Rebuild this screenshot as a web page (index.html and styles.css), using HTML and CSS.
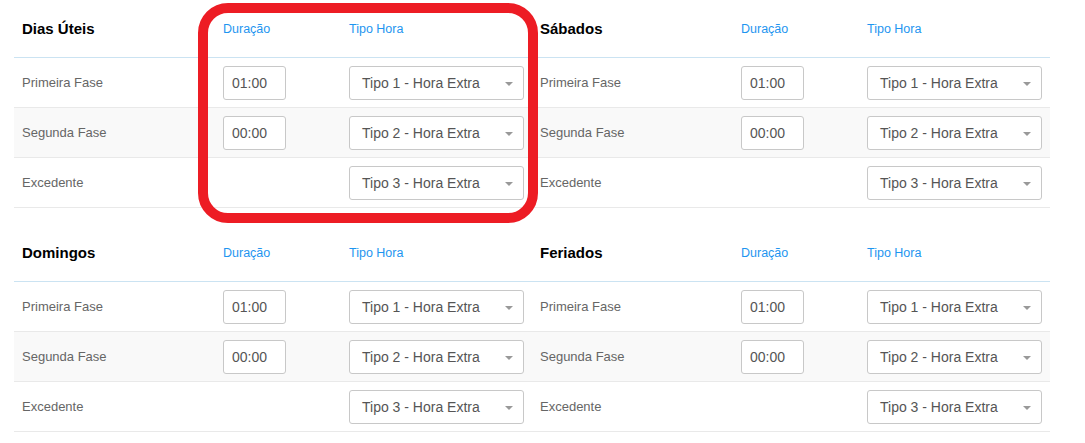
FILE: index.html
```html
<!DOCTYPE html>
<html lang="pt">
<head>
<meta charset="utf-8">
<title>Horas Extras</title>
<link rel="stylesheet" href="styles.css">
</head>
<body>
<div class="page">
  <div class="group">
    <div class="tbl">
      <div class="row head"><div class="title">Dias Úteis</div><div class="col-h">Duração</div><div class="col-h">Tipo Hora</div></div>
      <div class="row"><div class="lbl">Primeira Fase</div><div><span class="inp">01:00</span></div><div><span class="sel">Tipo 1 - Hora Extra<i class="caret"></i></span></div></div>
      <div class="row alt"><div class="lbl">Segunda Fase</div><div><span class="inp">00:00</span></div><div><span class="sel">Tipo 2 - Hora Extra<i class="caret"></i></span></div></div>
      <div class="row"><div class="lbl">Excedente</div><div></div><div><span class="sel">Tipo 3 - Hora Extra<i class="caret"></i></span></div></div>
    </div>
    <div class="tbl">
      <div class="row head"><div class="title">Sábados</div><div class="col-h">Duração</div><div class="col-h">Tipo Hora</div></div>
      <div class="row"><div class="lbl">Primeira Fase</div><div><span class="inp">01:00</span></div><div><span class="sel">Tipo 1 - Hora Extra<i class="caret"></i></span></div></div>
      <div class="row alt"><div class="lbl">Segunda Fase</div><div><span class="inp">00:00</span></div><div><span class="sel">Tipo 2 - Hora Extra<i class="caret"></i></span></div></div>
      <div class="row"><div class="lbl">Excedente</div><div></div><div><span class="sel">Tipo 3 - Hora Extra<i class="caret"></i></span></div></div>
    </div>
  </div>
  <div class="group">
    <div class="tbl">
      <div class="row head"><div class="title">Domingos</div><div class="col-h">Duração</div><div class="col-h">Tipo Hora</div></div>
      <div class="row"><div class="lbl">Primeira Fase</div><div><span class="inp">01:00</span></div><div><span class="sel">Tipo 1 - Hora Extra<i class="caret"></i></span></div></div>
      <div class="row alt"><div class="lbl">Segunda Fase</div><div><span class="inp">00:00</span></div><div><span class="sel">Tipo 2 - Hora Extra<i class="caret"></i></span></div></div>
      <div class="row"><div class="lbl">Excedente</div><div></div><div><span class="sel">Tipo 3 - Hora Extra<i class="caret"></i></span></div></div>
    </div>
    <div class="tbl">
      <div class="row head"><div class="title">Feriados</div><div class="col-h">Duração</div><div class="col-h">Tipo Hora</div></div>
      <div class="row"><div class="lbl">Primeira Fase</div><div><span class="inp">01:00</span></div><div><span class="sel">Tipo 1 - Hora Extra<i class="caret"></i></span></div></div>
      <div class="row alt"><div class="lbl">Segunda Fase</div><div><span class="inp">00:00</span></div><div><span class="sel">Tipo 2 - Hora Extra<i class="caret"></i></span></div></div>
      <div class="row"><div class="lbl">Excedente</div><div></div><div><span class="sel">Tipo 3 - Hora Extra<i class="caret"></i></span></div></div>
    </div>
  </div>
  <div class="highlight"></div>
</div>
</body>
</html>
```
FILE: styles.css
```css
* { box-sizing: border-box; }
html, body { margin: 0; padding: 0; background: #fff; }
body { font-family: "Liberation Sans", Arial, sans-serif; color: #555; }
.page { position: relative; padding: 0 0 0 14px; width: 1085px; }
.group { display: flex; margin-bottom: 16px; }
.tbl { width: 518px; display: flex; flex-direction: column; }
.row {
  display: grid;
  grid-template-columns: 201px 126px 191px;
  height: 50px;
  align-items: center;
  border-bottom: 1px solid #e9e9e9;
}
.row > div { padding: 0 8px; }
.row.alt { background: #f9f9f9; }
.row.head { height: 58px; border-bottom: 1px solid #cbe3f2; padding-bottom: 1px; }
.title { font-weight: bold; font-size: 15px; color: #000; }
.col-h { font-size: 12.5px; color: #1e95f0; padding-top: 1px !important; }
.lbl { font-size: 13px; color: #666; }
.inp {
  display: flex; align-items: center;
  width: 63px; height: 34px;
  border: 1px solid #c8c8c8; border-radius: 3px;
  padding-left: 8px; font-size: 14px; color: #555; background: #fff;
}
.sel {
  position: relative;
  display: flex; align-items: center;
  width: 175px; height: 34px;
  border: 1px solid #c8c8c8; border-radius: 3px;
  padding-left: 12px; font-size: 14px; color: #555; background: #fff;
}
.caret {
  position: absolute; right: 10px; top: 15px;
  width: 0; height: 0;
  border-left: 4px solid transparent; border-right: 4px solid transparent;
  border-top: 4px solid #999;
}
.highlight {
  position: absolute; left: 198px; top: 3px;
  width: 340px; height: 220px;
  border: 10px solid #ed1c24; border-radius: 30px;
  pointer-events: none;
}
```
